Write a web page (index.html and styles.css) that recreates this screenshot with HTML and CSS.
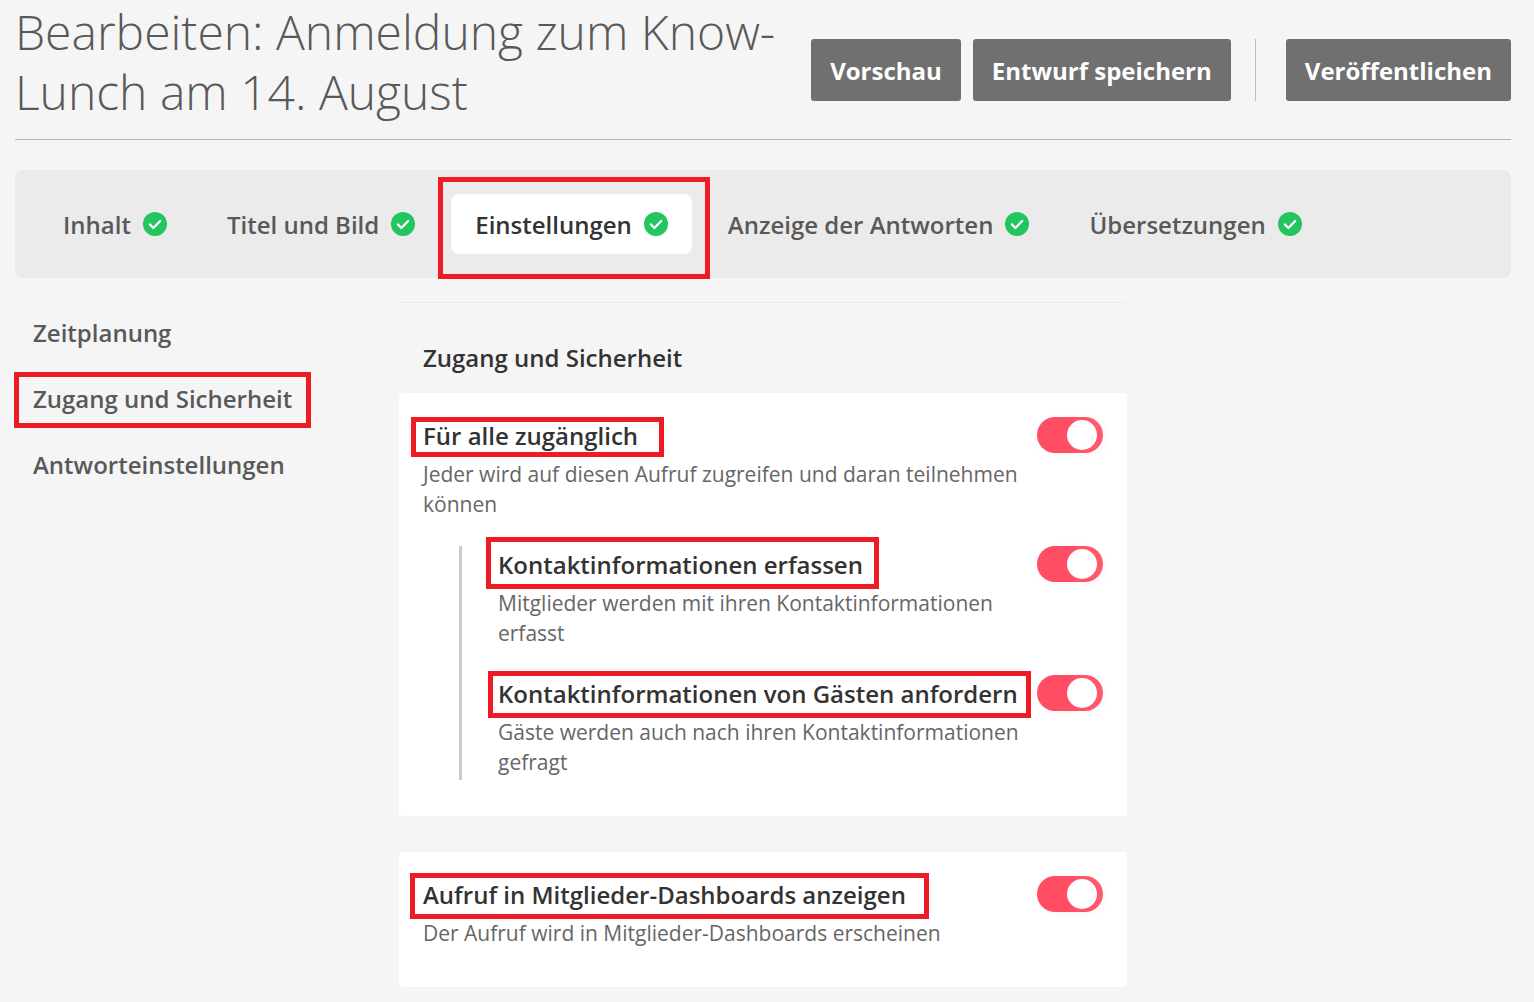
FILE: index.html
```html
<!DOCTYPE html>
<html lang="de">
<head>
    <meta charset="UTF-8">
    <meta name="viewport" content="width=device-width, initial-scale=1.0">
    <title>Bearbeiten: Anmeldung zum Know-Lunch am 14. August</title>
    <link rel="stylesheet" href="styles.css">
</head>
<body>
    <svg class="icon-defs" width="0" height="0">
        <symbol id="check" viewBox="0 0 24 24">
            <circle cx="12" cy="12" r="12" fill="#22c55e"/>
            <path d="M6.8 12.4l3.6 3.6 6.8-7" fill="none" stroke="#fff" stroke-width="2.2" stroke-linecap="round" stroke-linejoin="round"/>
        </symbol>
    </svg>

    <div class="page">
        <header class="header">
            <h1 class="title">Bearbeiten: Anmeldung zum Know-Lunch am 14. August</h1>
            <div class="actions">
                <button class="btn">Vorschau</button>
                <button class="btn">Entwurf speichern</button>
                <span class="divider"></span>
                <button class="btn">Veröffentlichen</button>
            </div>
        </header>

        <nav class="tabs">
            <a class="tab">Inhalt <svg class="check"><use href="#check"/></svg></a>
            <a class="tab">Titel und Bild <svg class="check"><use href="#check"/></svg></a>
            <a class="tab active">Einstellungen <svg class="check"><use href="#check"/></svg></a>
            <a class="tab">Anzeige der Antworten <svg class="check"><use href="#check"/></svg></a>
            <a class="tab">Übersetzungen <svg class="check"><use href="#check"/></svg></a>
        </nav>

        <div class="layout">
            <aside class="side-nav">
                <a class="side-link">Zeitplanung</a>
                <a class="side-link">Zugang und Sicherheit</a>
                <a class="side-link">Antworteinstellungen</a>
            </aside>

            <main class="content">
                <h2 class="section-title">Zugang und Sicherheit</h2>

                <section class="card">
                    <div class="setting">
                        <div class="setting-text">
                            <h3>Für alle zugänglich</h3>
                            <p>Jeder wird auf diesen Aufruf zugreifen und daran teilnehmen können</p>
                        </div>
                        <span class="toggle"></span>
                    </div>
                    <div class="nested">
                        <div class="setting">
                            <div class="setting-text">
                                <h3>Kontaktinformationen erfassen</h3>
                                <p>Mitglieder werden mit ihren Kontaktinformationen erfasst</p>
                            </div>
                            <span class="toggle"></span>
                        </div>
                        <div class="setting">
                            <div class="setting-text">
                                <h3>Kontaktinformationen von Gästen anfordern</h3>
                                <p>Gäste werden auch nach ihren Kontaktinformationen gefragt</p>
                            </div>
                            <span class="toggle"></span>
                        </div>
                    </div>
                </section>

                <section class="card card-short">
                    <div class="setting">
                        <div class="setting-text">
                            <h3>Aufruf in Mitglieder-Dashboards anzeigen</h3>
                            <p>Der Aufruf wird in Mitglieder-Dashboards erscheinen</p>
                        </div>
                        <span class="toggle"></span>
                    </div>
                </section>
            </main>
        </div>
    </div>

    <!-- rote Markierungen über dem Screenshot -->
    <div class="mark mark-tab"></div>
    <div class="mark mark-side"></div>
    <div class="mark mark-public"></div>
    <div class="mark mark-contact"></div>
    <div class="mark mark-guests"></div>
    <div class="mark mark-dashboard"></div>
</body>
</html>
```

FILE: styles.css
```css
* {
    box-sizing: border-box;
}
html, body {
    height: 1002px;
    overflow: hidden;
}
body {
    position: relative;
    margin: 0;
    background-color: #f5f5f5;
    font-family: "Open Sans", sans-serif;
    color: #595959;
}
.icon-defs {
    position: absolute;
}
.page {
    padding: 0 23px 0 15px;
}

.header {
    display: flex;
    align-items: flex-start;
    justify-content: space-between;
    height: 140px;
    padding-top: 2px;
    border-bottom: 1px solid #b3b3b3;
}
.title {
    width: 775px;
    margin: 0;
    font-size: 48px;
    font-weight: 300;
    line-height: 60px;
    color: #595959;
}
.actions {
    display: flex;
    align-items: stretch;
    height: 62px;
    margin-top: 37px;
}
.btn {
    padding: 0 19px;
    margin-left: 12px;
    border: none;
    border-radius: 3px;
    background-color: #707070;
    color: #fff;
    font-family: inherit;
    font-size: 24px;
    font-weight: 700;
}
.divider {
    width: 1px;
    margin: 0 18px 0 24px;
    background-color: #bdbdbd;
}

.tabs {
    display: flex;
    align-items: center;
    height: 108px;
    margin-top: 30px;
    padding-left: 24px;
    border-radius: 8px;
    background-color: #ebebeb;
}
.tab {
    display: flex;
    align-items: center;
    gap: 12px;
    height: 60px;
    padding: 0 24px;
    margin-right: 12px;
    border-radius: 8px;
    font-size: 24px;
    font-weight: 600;
    white-space: nowrap;
}
.tab.active {
    background-color: #fff;
    color: #333;
}
.check {
    width: 24px;
    height: 24px;
    margin-top: -1px;
}

.layout {
    display: flex;
    margin-top: 24px;
}
.side-nav {
    display: flex;
    flex-direction: column;
    width: 384px;
    padding: 0 18px;
}
.side-link {
    height: 66px;
    font-size: 24px;
    font-weight: 600;
    line-height: 62px;
}
.content {
    width: 728px;
}
.section-title {
    margin: 0 1px;
    padding: 38px 23px 18px;
    border-top: 1px solid #ebebeb;
    font-size: 24px;
    font-weight: 600;
    line-height: 34px;
    color: #333;
}
.card {
    height: 423px;
    padding: 24px;
    border-radius: 4px;
    background-color: #fff;
}
.card-short {
    height: 135px;
    margin-top: 36px;
}
.setting {
    display: flex;
    justify-content: space-between;
    gap: 10px;
}
.setting-text h3 {
    margin: 1px 0 5px;
    font-size: 24px;
    font-weight: 600;
    line-height: 36px;
    color: #333;
}
.setting-text p {
    margin: 0;
    font-size: 21px;
    line-height: 30px;
    color: #666;
}
.nested {
    display: flex;
    flex-direction: column;
    gap: 27px;
    margin: 27px 0 0 36px;
    padding: 0 0 3px 36px;
    border-left: 3px solid #ccc;
}
.toggle {
    position: relative;
    flex: none;
    width: 66px;
    height: 36px;
    border-radius: 18px;
    background: linear-gradient(90deg, #ff4d63 40%, #ff5a6e);
    box-shadow: 2px 2px 8px rgba(0, 0, 0, 0.04);
}
.toggle::after {
    content: "";
    position: absolute;
    top: 3px;
    right: 6px;
    width: 30px;
    height: 30px;
    border-radius: 50%;
    background-color: #fff;
}

/* Markierungen */
.mark {
    position: absolute;
    border: 5px solid #ed1c24;
}
.mark-tab { left: 438px; top: 177px; width: 272px; height: 102px; }
.mark-side { left: 14px; top: 372px; width: 297px; height: 56px; }
.mark-public { left: 411px; top: 417px; width: 253px; height: 40px; }
.mark-contact { left: 486px; top: 537px; width: 393px; height: 52px; }
.mark-guests { left: 488px; top: 671px; width: 543px; height: 47px; }
.mark-dashboard { left: 410px; top: 873px; width: 519px; height: 46px; }
```
